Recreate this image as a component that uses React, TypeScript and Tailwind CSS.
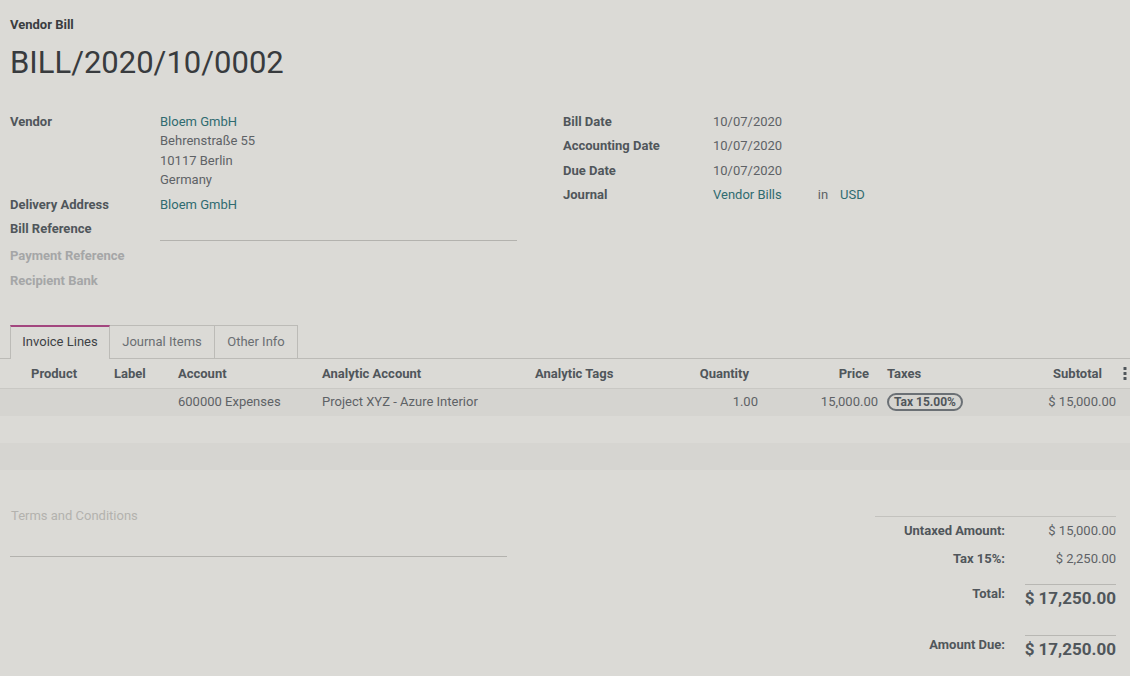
const label = "font-bold text-[#50565b]";
const link = "text-[#2f6b70]";
const value = "text-[#5e6266]";

function Field({ name, children, muted }: { name: string; children?: React.ReactNode; muted?: boolean }) {
  return (
    <div className="mb-[5px] flex">
      <div className={`w-[150px] shrink-0 ${muted ? "font-bold text-[#a5a6a7]" : label}`}>{name}</div>
      <div className="min-w-0 flex-1">{children}</div>
    </div>
  );
}

const cols = "grid grid-cols-[27px_83px_64px_144px_213px_113px_118px_120px_116px_122px_10px]";

function Kebab() {
  return (
    <svg width="4" height="13" viewBox="0 0 4 13" className="fill-[#50565b]">
      <rect x="0.5" y="0" width="3" height="3" rx="0.6" />
      <rect x="0.5" y="5" width="3" height="3" rx="0.6" />
      <rect x="0.5" y="10" width="3" height="3" rx="0.6" />
    </svg>
  );
}

function LinesTable() {
  return (
    <div>
      <div className={`${cols} h-[30px] items-center border-b border-[#c9c8c4] font-bold text-[#50565b] shadow-[0_2px_3px_rgba(0,0,0,0.06)]`}>
        <div />
        <div className="pl-1">Product</div>
        <div className="pl-1">Label</div>
        <div className="pl-1">Account</div>
        <div className="pl-1">Analytic Account</div>
        <div className="pl-1">Analytic Tags</div>
        <div className="pr-[13px] text-right">Quantity</div>
        <div className="pr-[13px] text-right">Price</div>
        <div className="pl-[5px]">Taxes</div>
        <div className="pr-[18px] text-right">Subtotal</div>
        <div className="flex justify-center pr-[1px]">
          <Kebab />
        </div>
      </div>
      <div className={`${cols} h-[27px] items-center bg-[#d5d4d0] pb-px ${value}`}>
        <div />
        <div />
        <div />
        <div className="pl-1">600000 Expenses</div>
        <div className="pl-1">Project XYZ - Azure Interior</div>
        <div />
        <div className="pr-1 text-right">1.00</div>
        <div className="pr-1 text-right">15,000.00</div>
        <div className="pl-[5px]">
          <span className="inline-block rounded-full border-2 border-[#6b7075] px-[5px] text-[12px] leading-[14px] font-bold text-[#50565b]">
            Tax 15.00%
          </span>
        </div>
        <div className="pr-1 text-right">$ 15,000.00</div>
        <div />
      </div>
      <div className="h-[27px]" />
      <div className="h-[27px] bg-[#d6d5d1]" />
    </div>
  );
}

function Amount({ children }: { children: React.ReactNode }) {
  return (
    <div className="flex justify-end whitespace-nowrap border-t border-[#b8b7b3] text-[17px] leading-[26px] font-bold text-[#50565b]">
      {children}
    </div>
  );
}

function Totals() {
  return (
    <div className="w-[241px] border-t border-[#c3c2be] pt-px">
      <div className="grid grid-cols-[1fr_91px] gap-x-[20px]">
        <div className={`h-[31px] pt-[3px] text-right ${label}`}>Untaxed Amount:</div>
        <div className={`h-[31px] pt-[3px] text-right ${value}`}>$ 15,000.00</div>
        <div className={`h-[35px] text-right ${label}`}>Tax 15%:</div>
        <div className={`h-[35px] text-right ${value}`}>$ 2,250.00</div>
        <div className={`h-[51px] text-right ${label}`}>Total:</div>
        <div className="h-[51px]">
          <Amount>$ 17,250.00</Amount>
        </div>
        <div className={`text-right ${label}`}>Amount Due:</div>
        <Amount>$ 17,250.00</Amount>
      </div>
    </div>
  );
}

export default function App() {
  return (
    <div className="h-[676px] w-[1130px] overflow-hidden bg-[#dbdad6] font-['Roboto',sans-serif] text-[13px] leading-[19.5px] text-[#5e6266]">
      <div className="px-[10px] pt-[15px]">
        <div className="font-bold text-[#3a3d40]">Vendor Bill</div>
        <h1 className="mt-[9px] text-[31px] leading-[38px] text-[#383b3e]">BILL/2020/10/0002</h1>

        <div className="mt-[30px] flex">
          <div className="w-[553px] shrink-0">
            <Field name="Vendor">
              <div className={link}>Bloem GmbH</div>
              <div>Behrenstraße 55</div>
              <div>10117 Berlin</div>
              <div>Germany</div>
            </Field>
            <Field name="Delivery Address">
              <span className={link}>Bloem GmbH</span>
            </Field>
            <div className="mb-[5px] flex">
              <div className={`w-[150px] shrink-0 ${label}`}>Bill Reference</div>
              <div className="h-[22px] w-[357px] border-b border-[#b3b2ae]" />
            </div>
            <Field name="Payment Reference" muted />
            <Field name="Recipient Bank" muted />
          </div>
          <div className="flex-1">
            <Field name="Bill Date">10/07/2020</Field>
            <Field name="Accounting Date">10/07/2020</Field>
            <Field name="Due Date">10/07/2020</Field>
            <Field name="Journal">
              <span className={link}>Vendor Bills</span>
              <span className="ml-[36px] text-[#5e6266]">in</span>
              <span className={`ml-[12px] ${link}`}>USD</span>
            </Field>
          </div>
        </div>
      </div>

      <div className="mt-[30px] flex h-[34px] items-end">
        <div className="h-full w-[10px] border-b border-[#bcbbb7]" />
        <div className="flex h-full w-[100px] items-center justify-center border-x border-t-2 border-x-[#bcbbb7] border-t-[#a3467f] pb-[2px] text-[#3d4145]">
          Invoice Lines
        </div>
        <div className="flex h-full w-[105px] items-center justify-center border-r border-t border-b border-[#bcbbb7] text-[#6a6e72]">
          Journal Items
        </div>
        <div className="flex h-full w-[83px] items-center justify-center border-r border-t border-b border-[#bcbbb7] text-[#6a6e72]">
          Other Info
        </div>
        <div className="h-full flex-1 border-b border-[#bcbbb7]" />
      </div>

      <LinesTable />

      <div className="flex items-start justify-between pl-[10px] pr-[14px]">
        <div className="w-[497px] pt-[36px]">
          <div className="pl-px text-[#b3b2ae]">Terms and Conditions</div>
          <div className="mt-[30px] border-b border-[#b3b2ae]" />
        </div>
        <div className="pt-[46px]">
          <Totals />
        </div>
      </div>
    </div>
  );
}
